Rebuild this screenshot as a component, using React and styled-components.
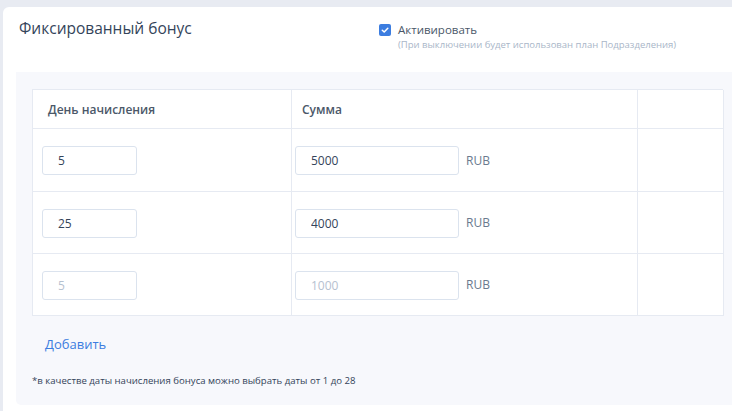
import React from "react";
import styled, { createGlobalStyle } from "styled-components";

const Global = createGlobalStyle`
  html, body { margin: 0; padding: 0; }
  body {
    background: #e8ebf2;
    font-family: "Open Sans", "Noto Sans", sans-serif;
    overflow: hidden;
    width: 732px;
    height: 411px;
  }
  * { box-sizing: border-box; }
`;

const Page = styled.div`
  padding: 7px 0 0 3px;
  height: 411px;
`;

const Card = styled.div`
  background: #ffffff;
  border-radius: 6px 0 0 0;
  width: 760px;
  height: 404px;
  padding: 11px 0 0 13px;
`;

const Header = styled.div`
  display: grid;
  grid-template-columns: 360px auto;
  padding-left: 3px;
`;

const Title = styled.h2`
  margin: 0;
  font-size: 15.5px;
  line-height: 20px;
  font-weight: 400;
  color: #34445a;
`;

const Activate = styled.div`
  display: grid;
  grid-template-columns: 12px auto;
  column-gap: 7px;
  padding-top: 6px;
`;

const Check = styled.span`
  width: 12px;
  height: 12px;
  border-radius: 2px;
  background: #3c7de0;
  display: flex;
  align-items: center;
  justify-content: center;
`;

const ActLabel = styled.span`
  font-size: 11.5px;
  line-height: 14px;
  color: #4a5768;
  margin-top: -1px;
`;

const ActHint = styled.span`
  grid-column: 2;
  font-size: 9.5px;
  line-height: 14px;
  color: #a9b6c8;
  margin-top: 1px;
`;

const Panel = styled.div`
  margin-top: 20px;
  background: #f7f8fc;
  border-radius: 0 0 0 5px;
  padding: 17px 16px 0 16px;
  height: 333px;
`;

const Table = styled.div`
  display: grid;
  grid-template-columns: 259px 346px 86px;
  grid-auto-rows: 62px;
  grid-template-rows: 39px 63px;
  width: 691px;
  background: #ffffff;
  border-top: 1px solid #e6eaf2;
  border-left: 1px solid #e6eaf2;
`;

const Cell = styled.div`
  border-right: 1px solid #e6eaf2;
  border-bottom: 1px solid #e6eaf2;
  display: flex;
  align-items: center;
  padding-left: ${(p) => p.$pad}px;
`;

const HeadText = styled.span`
  font-size: 12px;
  font-weight: 600;
  color: #4b5869;
`;

const Input = styled.input`
  width: ${(p) => p.$w}px;
  height: 29px;
  border: 1px solid #dbe3ee;
  border-radius: 3px;
  padding: 0 0 0 15px;
  font-family: "Open Sans", "Noto Sans", sans-serif;
  font-size: 12px;
  color: #34445a;
  background: #fff;
  outline: none;
  margin-top: 1px;
  &::placeholder { color: #b6c1d0; }
`;

const Currency = styled.span`
  margin-left: 7px;
  font-size: 12px;
  color: #6a7a8e;
`;

const AddLink = styled.a`
  display: block;
  margin: 20px 0 0 13px;
  font-size: 13px;
  line-height: 16px;
  color: #3c7de0;
  cursor: pointer;
`;

const Note = styled.p`
  margin: 22px 0 0 0;
  font-size: 9.6px;
  line-height: 14px;
  color: #34445a;
`;

const rows = [
  { day: "5", sum: "5000" },
  { day: "25", sum: "4000" },
  { day: "", sum: "", ph: true },
];

export default function App() {
  return (
    <>
      <Global />
      <Page>
        <Card>
          <Header>
            <Title>Фиксированный бонус</Title>
            <Activate>
              <Check>
                <svg width="8" height="8" viewBox="0 0 8 8">
                  <path d="M1.3 4.2 L3.2 6 L6.8 2.2" stroke="#fff" strokeWidth="1.5" fill="none" strokeLinecap="round" strokeLinejoin="round" />
                </svg>
              </Check>
              <ActLabel>Активировать</ActLabel>
              <ActHint>(При выключении будет использован план Подразделения)</ActHint>
            </Activate>
          </Header>
          <Panel>
            <Table>
              <Cell $pad={15}><HeadText>День начисления</HeadText></Cell>
              <Cell $pad={10}><HeadText>Сумма</HeadText></Cell>
              <Cell $pad={0} />
              {rows.map((r, i) => (
                <React.Fragment key={i}>
                  <Cell $pad={9}>
                    <Input $w={95} defaultValue={r.day} placeholder={r.ph ? "5" : ""} />
                  </Cell>
                  <Cell $pad={3}>
                    <Input $w={164} defaultValue={r.sum} placeholder={r.ph ? "1000" : ""} />
                    <Currency>RUB</Currency>
                  </Cell>
                  <Cell $pad={0} />
                </React.Fragment>
              ))}
            </Table>
            <AddLink>Добавить</AddLink>
            <Note>*в качестве даты начисления бонуса можно выбрать даты от 1 до 28</Note>
          </Panel>
        </Card>
      </Page>
    </>
  );
}
